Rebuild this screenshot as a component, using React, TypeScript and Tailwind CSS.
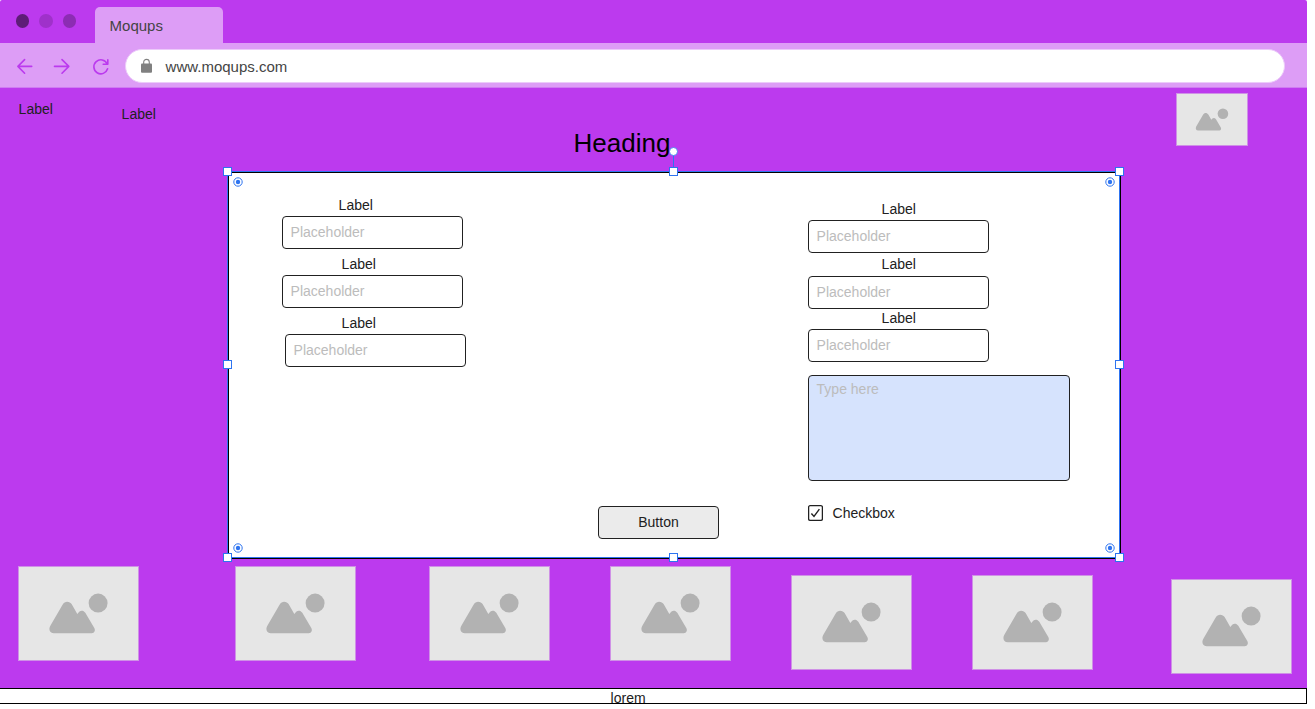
import React from 'react';

function ImagePlaceholder({ className }: { className: string }) {
  return (
    <div className={`bg-[#e6e6e6] outline-1 -outline-offset-1 outline-[#cf91e6] ${className}`}>
      <svg viewBox="0 0 121 95" className="block h-full w-full" fill="#b2b2b2">
        <path d="M44.7 38.6C46.8 34.8 51.6 34.8 53.9 38.6L59.3 48L61.2 45.8C63 44.2 65.6 44.4 67.3 46.8L76.3 62C77.7 64.6 76.3 67.2 73.8 67.2H35.8C31.8 67.2 30.4 63.5 32.2 60Z" />
        <circle cx="80.1" cy="37.1" r="9.5" />
      </svg>
    </div>
  );
}

type FieldProps = { label: string; className: string; labelClass: string; inputClass: string };

function Field({ label, className, labelClass, inputClass }: FieldProps) {
  return (
    <div className={`flex flex-col items-start ${className}`}>
      <span className={`leading-4 ${labelClass}`}>{label}</span>
      <div className={`h-[33px] w-[181px] rounded-[4px] border border-[#212121] bg-white px-[7.6px] pt-[7px] leading-4 text-[#bcbcbc] ${inputClass}`}>
        Placeholder
      </div>
    </div>
  );
}

const handles = [
  [4, 24], [450, 24], [896, 24],
  [4, 217], [896, 217],
  [4, 410], [450, 410], [896, 410],
];

const anchors = [[15, 35], [887, 35], [15, 401], [887, 401]];

function SelectionOverlay() {
  return (
    <svg className="pointer-events-none absolute -left-[6px] -top-[26px]" width="903" height="418" viewBox="0 0 903 418">
      <rect x="4.5" y="24.5" width="892" height="386" fill="none" stroke="#2e74f0" />
      <path d="M450.5 8V20" stroke="#2e74f0" />
      <circle cx="450.5" cy="4.5" r="4" fill="#fff" stroke="#2e74f0" strokeWidth=".8" />
      {handles.map(([x, y]) => (
        <rect key={`${x}-${y}`} x={x - 3.5} y={y - 3.5} width="8" height="8" fill="#fff" stroke="#2e74f0" />
      ))}
      {anchors.map(([x, y]) => (
        <g key={`${x}-${y}`}>
          <circle cx={x} cy={y} r="4.2" fill="#fff" stroke="#2e74f0" strokeWidth="1" />
          <circle cx={x} cy={y} r="2.2" fill="#2e74f0" />
        </g>
      ))}
    </svg>
  );
}

function TabBar() {
  return (
    <div className="flex h-[43px]">
      <div className="flex w-[95px] items-start gap-[10px] pl-[15.5px] pt-[14px]">
        <i className="size-[13.6px] rounded-full bg-[#5e1d77]" />
        <i className="size-[13.6px] rounded-full bg-[#9f31ca]" />
        <i className="size-[13.6px] rounded-full bg-[#8c2cb3]" />
      </div>
      <div className="mt-[7px] h-9 w-[127.5px] rounded-t-[5px] bg-[#dd9df6] pl-[14.6px] pt-[10px] text-[15px] leading-[17px] text-[#444]">
        Moqups
      </div>
    </div>
  );
}

function Toolbar() {
  return (
    <div className="flex h-[45px] items-start border-b border-[#cf7bf2] bg-[#dd9df6]">
      <svg className="block w-[125px]" height="44" viewBox="0 43 125 44" fill="none" stroke="#bb3aee" strokeWidth="1.6" strokeLinecap="round" strokeLinejoin="round">
        <path d="M31.7 66.4H18M24.6 59.6L17.9 66.4L24.6 73.2" />
        <path d="M54.5 66.4H68.6M62 59.6L68.8 66.4L62 73.2" />
        <path d="M107.8 59.8V64.2H103.2M107.2 63.8A7 7 0 1 0 107.6 68.8" />
      </svg>
      <div className="mt-[6px] flex h-[34px] w-[1160px] items-start rounded-full border border-[#eccbfa] bg-white">
        <svg className="ml-[15px] mt-[8px] block" width="12" height="16" viewBox="0 0 12 16" fill="none">
          <rect x="0" y="5.6" width="11" height="9.2" rx="1" fill="#808080" />
          <path d="M2.7 6V4.2A2.8 2.8 0 0 1 8.3 4.2V6" stroke="#808080" strokeWidth="1.1" />
        </svg>
        <span className="ml-[12.6px] mt-[8px] text-[15px] leading-[17px] text-[#444]">www.moqups.com</span>
      </div>
    </div>
  );
}

function FormPanel() {
  return (
    <section className="relative ml-[228px] grid h-[387px] w-[893px] grid-cols-[316px_210px_262px] border border-black bg-white pl-[53px]">
      <div>
        <Field label="Label" className="pt-6" labelClass="ml-[56.6px]" inputClass="mt-[3px]" />
        <Field label="Label" className="pt-[7px]" labelClass="ml-[59.6px]" inputClass="mt-[3px]" />
        <Field label="Label" className="pt-[7px]" labelClass="ml-[59.6px]" inputClass="ml-[3px] mt-[3px]" />
      </div>
      <div className="flex flex-col items-start pt-[333px]">
        <button className="flex h-[33px] w-[121px] justify-center rounded-[4px] border border-[#212121] bg-[#ebebeb] pt-[7px] leading-4">
          Button
        </button>
      </div>
      <div>
        <Field label="Label" className="pt-7" labelClass="ml-[73.6px]" inputClass="mt-[3px]" />
        <Field label="Label" className="pt-[3px]" labelClass="ml-[73.6px]" inputClass="mt-1" />
        <Field label="Label" className="pt-px" labelClass="ml-[73.6px]" inputClass="mt-[3px]" />
        <div className="mt-[13px] h-[106px] rounded-[4px] border border-[#212121] bg-[#d6e3fd] px-[7.6px] pt-[5px] leading-4 text-[#bcbcbc]">
          Type here
        </div>
        <div className="mt-6 flex gap-[9.6px] leading-4">
          <svg width="15" height="16" viewBox="0 0 15 16" fill="none" stroke="#212121">
            <rect x=".6" y=".7" width="13.8" height="14.6" rx="1.5" strokeWidth="1.3" />
            <path d="M3.4 8.5L6 11.4L11.4 4.2" strokeWidth="1.4" />
          </svg>
          <span>Checkbox</span>
        </div>
      </div>
      <SelectionOverlay />
    </section>
  );
}

const gallery = ['mt-[7px]', 'mt-[7px]', 'mt-[7px]', 'mt-[7px]', 'mt-4', 'mt-4', 'mt-5'];

export default function App() {
  return (
    <div className="h-[709px] w-full overflow-hidden bg-white font-['Liberation_Sans',Arial,sans-serif] text-[14px] text-[#212121]">
      <div className="h-[688px] w-[1307px] rounded-t-[2px] bg-[#bc3aee]">
        <TabBar />
        <Toolbar />
        <header className="grid h-[84px] grid-cols-[103px_452px_603px_72px] items-start pl-[18px]">
          <span className="ml-[.6px] mt-[13px] leading-4">Label</span>
          <span className="ml-[.6px] mt-[18px] leading-4">Label</span>
          <h1 className="ml-[.6px] mt-10 text-[26px] leading-[30px] text-black">Heading</h1>
          <ImagePlaceholder className="mt-[5px] h-[53px] w-[72px]" />
        </header>
        <FormPanel />
        <div className="grid grid-cols-[217px_194px_181px_181px_181px_199px_121px] items-start pl-[18px]">
          {gallery.map((offset, i) => (
            <ImagePlaceholder key={i} className={`h-[95px] w-[121px] ${offset}`} />
          ))}
        </div>
      </div>
      <footer className="h-4 w-[1307px] border-y border-r border-black bg-white pl-[610.6px] pt-[1px] leading-4">
        lorem
      </footer>
    </div>
  );
}
